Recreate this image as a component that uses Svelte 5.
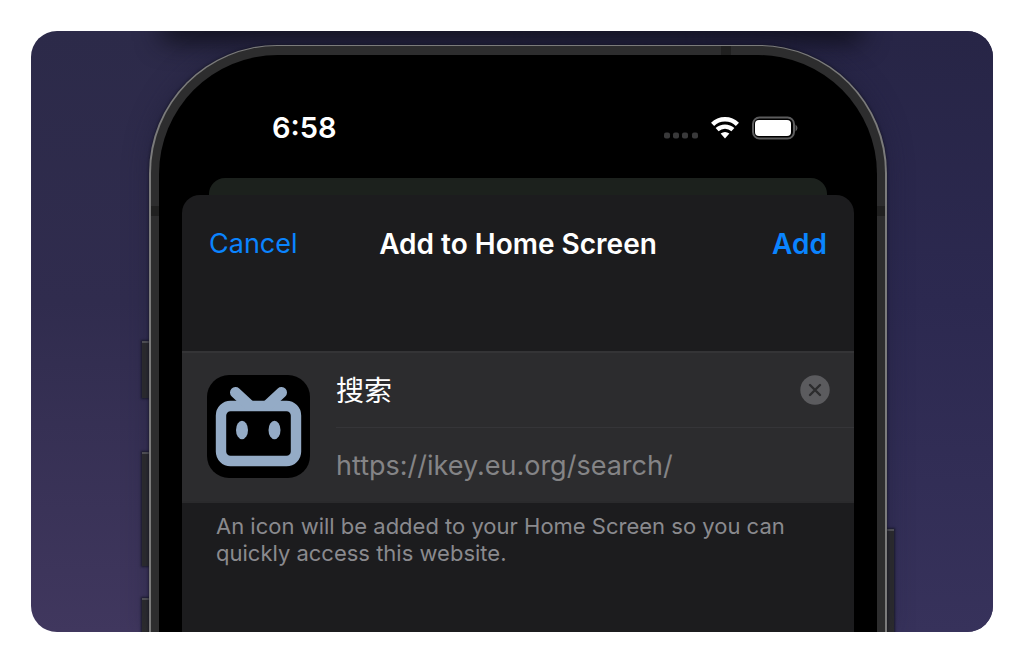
<script>
  let title = $state('搜索');
  const address = 'https://ikey.eu.org/search/';
</script>

<main>
  <section class="backdrop">
    <div class="phone">
      <i class="key key-action"></i>
      <i class="key key-up"></i>
      <i class="key key-down"></i>
      <i class="key key-power"></i>
      <i class="band band-top"></i>
      <i class="band band-left"></i>
      <i class="band band-right"></i>
      <div class="screen">
        <div class="status">
          <time>6:58</time>
          <div class="signals">
            <svg width="34" height="24" viewBox="0 0 34 24" aria-hidden="true">
              <g fill="#39393a">
                <rect x="0" y="16.5" width="6" height="6" rx="2" />
                <rect x="9" y="16.5" width="6" height="6" rx="2" />
                <rect x="18" y="16.5" width="6" height="6" rx="2" />
                <rect x="28" y="16.5" width="6" height="6" rx="2" />
              </g>
            </svg>
            <svg width="28" height="24" viewBox="0 0 28 24" aria-hidden="true">
              <g fill="none" stroke="#fff" stroke-width="4.4">
                <path d="M1.6 8.4C8.3 1.6 19.7 1.6 26.4 8.4" />
                <path d="M6.1 13.7C10.6 9.6 17.4 9.6 21.9 13.7" />
              </g>
              <path d="M9.6 17.6Q14 14.3 18.4 17.6L14 22.6Z" fill="#fff" />
            </svg>
            <svg width="46" height="24" viewBox="0 0 46 24" aria-hidden="true">
              <rect x="1" y="1.5" width="41" height="21" rx="6.5" fill="none" stroke="#5c5c5d" stroke-width="2" />
              <rect x="3" y="4" width="36" height="16" rx="4" fill="#fff" />
              <path d="M43.5 8.5Q47.5 12 43.5 15.5Z" fill="#5c5c5d" />
            </svg>
          </div>
        </div>

        <div class="behind"></div>
        <form class="sheet" onsubmit={(e) => e.preventDefault()}>
          <header>
            <button type="button" class="cancel">Cancel</button>
            <h1>Add to Home Screen</h1>
            <button type="submit" class="add">Add</button>
          </header>
          <div class="entry">
            <svg class="app-icon" viewBox="0 0 103 103" aria-hidden="true">
              <rect width="103" height="103" rx="22" fill="#000" />
              <g fill="none" stroke="#94abc6" stroke-linecap="round">
                <rect x="14" y="31" width="75" height="55" rx="9.5" stroke-width="10.4" />
                <path d="M28.500 17.500L42 30M74.500 17.500L61 30" stroke-width="11" />
              </g>
              <ellipse cx="35" cy="55" rx="6" ry="9.2" fill="#94abc6" />
              <ellipse cx="67.500" cy="55" rx="6" ry="9.2" fill="#94abc6" />
            </svg>
            <div class="fields">
              <div class="field">
                <input type="text" aria-label="Title" bind:value={title} />
                <button type="button" class="clear" aria-label="Clear" onclick={() => (title = '')}>
                  <svg width="30" height="30" viewBox="0 0 30 30" aria-hidden="true">
                    <circle cx="15" cy="15" r="14.7" fill="#5b5b5e" />
                    <path d="M10 10L20 20M20 10L10 20" stroke="#2c2c2e" stroke-width="2.4" stroke-linecap="round" />
                  </svg>
                </button>
              </div>
              <div class="field">
                <p class="address">{address}</p>
              </div>
            </div>
          </div>
          <p class="note">An icon will be added to your Home Screen so you can quickly access this website.</p>
        </form>
      </div>
    </div>
  </section>
</main>

<style>
  :global(body) {
    margin: 0;
    background: #fff;
  }

  main {
    padding: 31px;
    font-family: Inter, 'Noto Sans CJK SC', sans-serif;
  }

  main *,
  main {
    box-sizing: border-box;
  }

  .backdrop {
    position: relative;
    z-index: 0;
    overflow: hidden;
    padding: 14px 106px 0 118px;
    border-radius: 26px;
    background: linear-gradient(#2c2a49, #302c4e 45%, #40375e);
  }

  .backdrop::before {
    content: '';
    position: absolute;
    inset: 0 0 0 50%;
    z-index: -1;
    background: linear-gradient(#272546, #2c2950 45%, #37325b);
    mask: linear-gradient(90deg, transparent, #000 60%);
  }

  .backdrop::after {
    content: '';
    position: absolute;
    top: -20px;
    left: 14%;
    right: 14%;
    z-index: -1;
    height: 20px;
    box-shadow: 0 6px 26px 4px #10101c;
  }

  .phone {
    position: relative;
    padding: 9px 8px 0;
    border: 2px solid #7b7b7b;
    border-width: 1px 2px 0;
    border-radius: 128px 128px 0 0;
    background: #2d2d2e;
    box-shadow: 0 0 3px #11111e, 0 0 24px #1c1b3580;
  }

  .key {
    position: absolute;
    z-index: -1;
    width: 8px;
    border-top: 2px solid #58585a;
    background: #2d2d2d;
    box-shadow: 0 0 2px 1px #1a1a2a;
  }

  .key-action {
    top: 295px;
    left: -9px;
    height: 57px;
  }

  .key-up {
    top: 406px;
    left: -9px;
    height: 114px;
  }

  .key-down {
    top: 552px;
    left: -9px;
    height: 60px;
  }

  .key-power {
    top: 483px;
    right: -9px;
    height: 130px;
  }

  .band {
    position: absolute;
    background: #202020;
  }

  .band-top {
    top: 0;
    right: 154px;
    width: 10px;
    height: 9px;
  }

  .band-left,
  .band-right {
    top: 160px;
    width: 8px;
    height: 10px;
  }

  .band-left {
    left: 0;
  }

  .band-right {
    right: 0;
  }

  .screen {
    padding: 0 23px;
    border-radius: 119px 119px 0 0;
    background: #000;
  }

  .status {
    display: flex;
    align-items: center;
    justify-content: space-between;
    height: 123px;
    padding: 22px 56px 0 90px;
  }

  time {
    color: #fff;
    font-size: 29px;
    font-weight: 600;
    line-height: 32px;
  }

  .signals {
    display: flex;
    gap: 13px;
  }

  .behind {
    height: 17px;
    margin: 0 27px;
    border-radius: 16px 16px 0 0;
    background: #1c211d;
  }

  .sheet {
    padding-bottom: 65px;
    border-radius: 18px 18px 0 0;
    background: #1c1c1e;
  }

  header {
    display: grid;
    grid-template-columns: 1fr auto 1fr;
    align-items: center;
    height: 98px;
    margin-bottom: 58px;
    padding: 0 27px;
  }

  button {
    padding: 0;
    border: 0;
    background: none;
    color: #0a84ff;
    font: inherit;
    font-size: 27px;
    line-height: 34px;
    cursor: pointer;
  }

  .cancel {
    justify-self: start;
  }

  .add {
    justify-self: end;
    font-size: 28px;
    font-weight: 600;
  }

  h1 {
    margin: 0;
    color: #fff;
    font-size: 28px;
    font-weight: 600;
    line-height: 34px;
  }

  .entry {
    display: flex;
    align-items: center;
    gap: 26px;
    padding-left: 25px;
    border-top: 2px solid #343436;
    border-bottom: 2px solid #2a2a2c;
    background: #2c2c2e;
  }

  .app-icon {
    flex: none;
    width: 103px;
    height: 103px;
    margin-bottom: 2px;
  }

  .fields {
    flex: 1;
    min-width: 0;
  }

  .field {
    display: flex;
    align-items: center;
    height: 74px;
    padding-right: 24px;
  }

  .field + .field {
    border-top: 1px solid #353538;
  }

  input {
    flex: 1;
    min-width: 0;
    padding: 2px 0 0;
    border: 0;
    outline: 0;
    background: none;
    color: #fff;
    font: inherit;
    font-size: 28px;
    line-height: 34px;
  }

  .clear {
    display: flex;
  }

  .address {
    margin: 0;
    padding-top: 2px;
    color: #848486;
    font-size: 27px;
    line-height: 34px;
  }

  .note {
    max-width: 640px;
    margin: 10px 34px 0;
    color: #8a8a8e;
    font-size: 22px;
    line-height: 27px;
  }
</style>
